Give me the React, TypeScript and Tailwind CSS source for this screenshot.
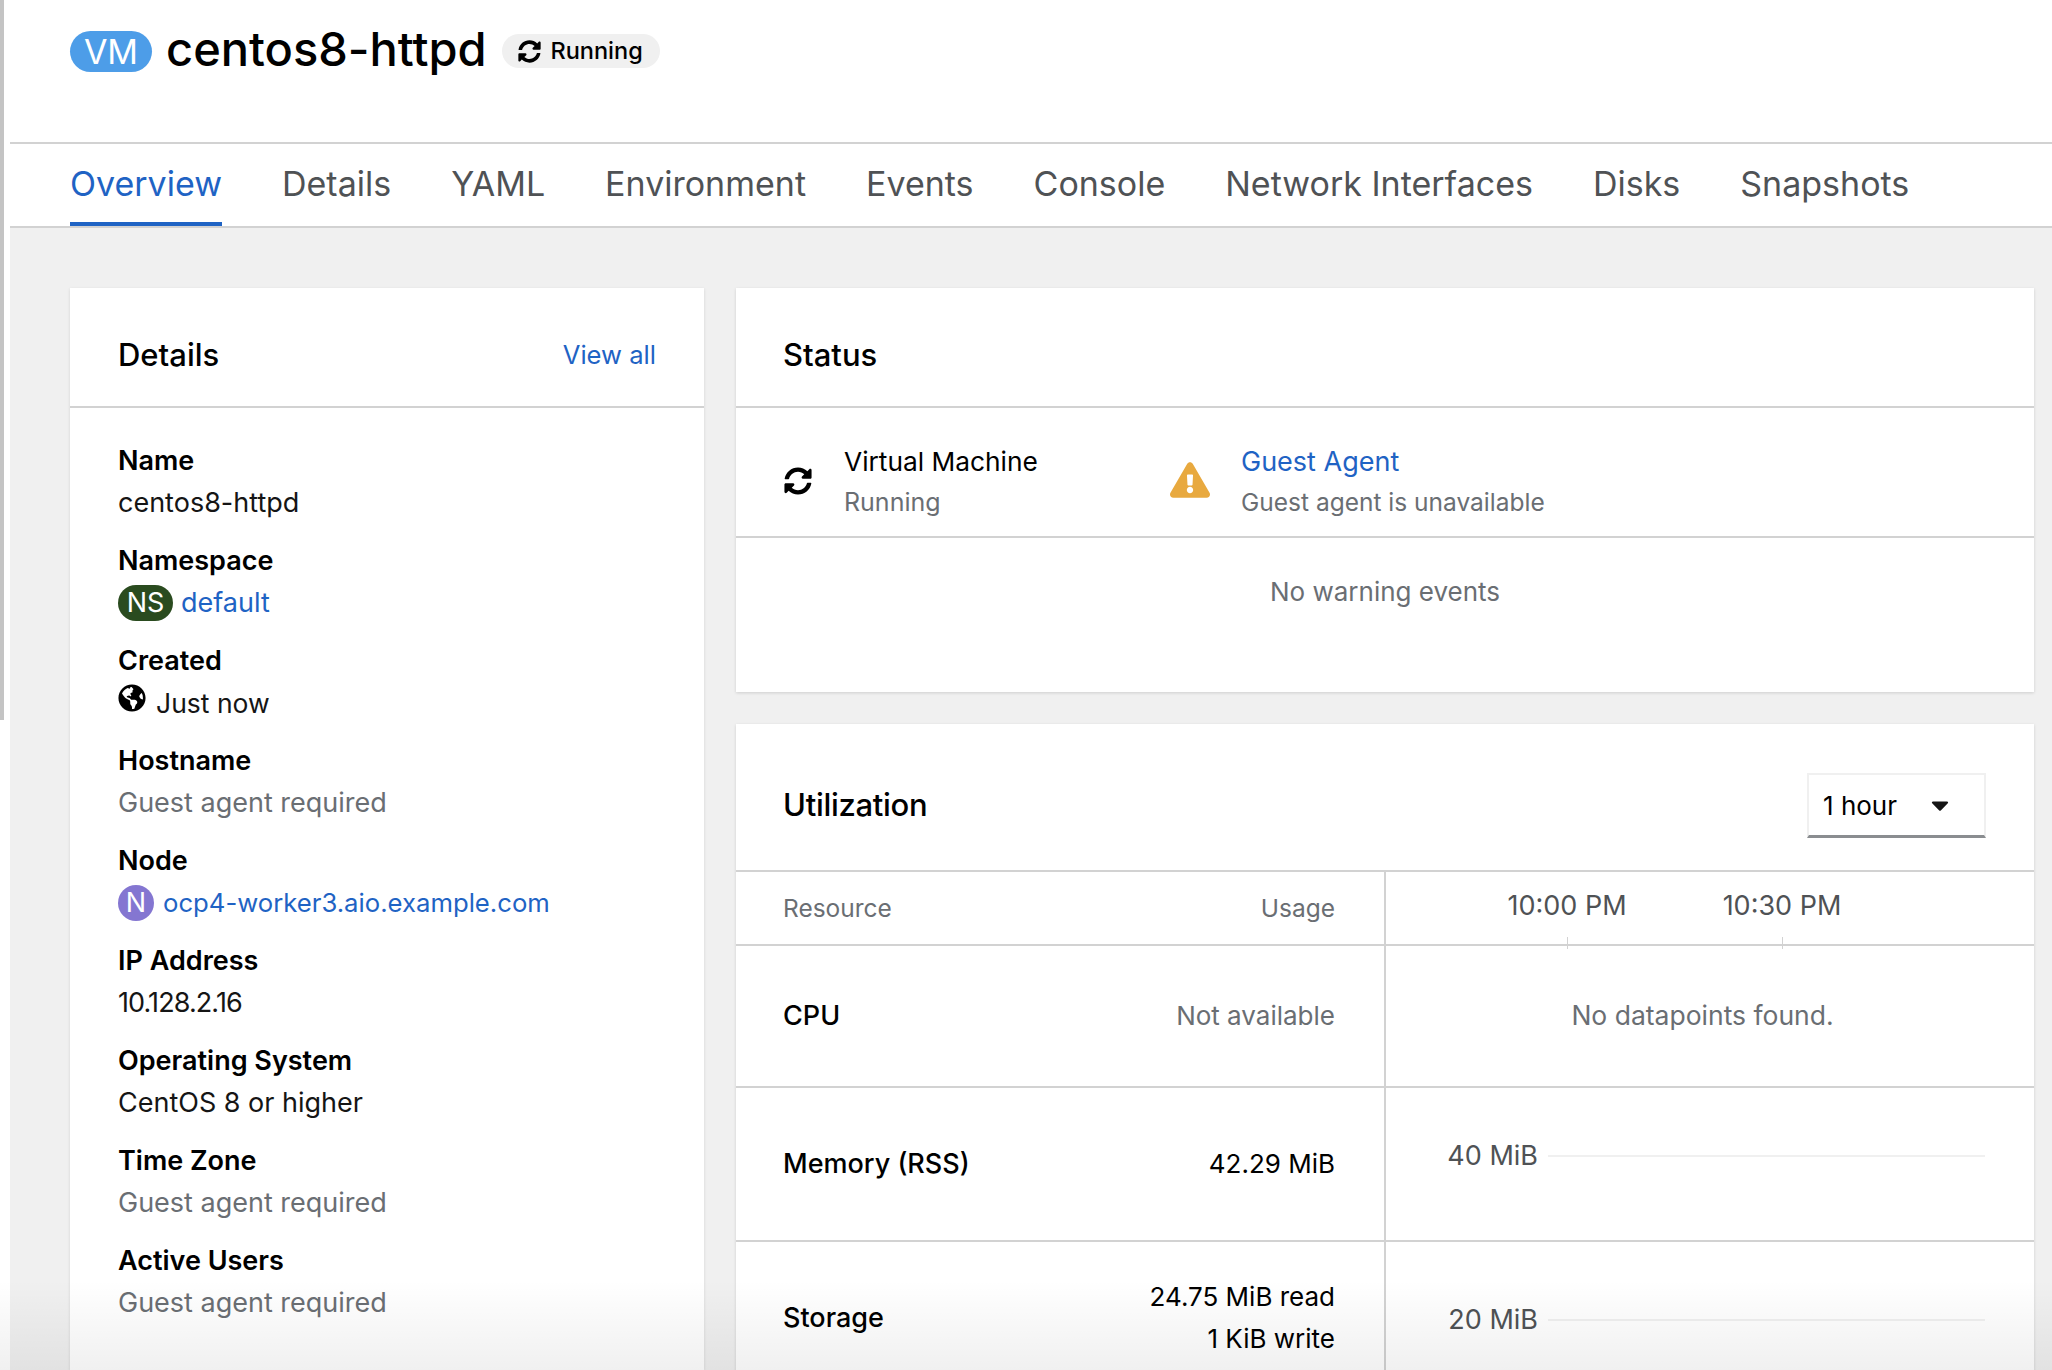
import React from 'react';
import { FaSyncAlt, FaGlobeAmericas, FaExclamationTriangle, FaCaretDown } from 'react-icons/fa';

const tabs = ['Overview', 'Details', 'YAML', 'Environment', 'Events', 'Console', 'Network Interfaces', 'Disks', 'Snapshots'];

const Field = ({ label, children }: { label: string; children: React.ReactNode }) => (
  <div className="mb-4">
    <div className="h-[42px] leading-[42px] font-semibold text-black">{label}</div>
    <div className="h-[42px] leading-[42px] flex items-center">{children}</div>
  </div>
);

const Muted = ({ children }: { children: React.ReactNode }) => <span className="text-[#6a6e73]">{children}</span>;

const DetailsCard = () => (
  <section className="w-[634px] shrink-0 bg-white shadow-[0_1px_3px_rgba(0,0,0,0.12)]">
    <div className="h-[120px] px-12 pt-[16px] flex items-center justify-between border-b-2 border-[#d2d2d2]">
      <h2 className="text-[31px] font-medium text-black">Details</h2>
      <a className="text-[25.6px] text-[#1f63c4]">View all</a>
    </div>
    <div className="px-12 pt-[32px]">
      <Field label="Name">centos8-httpd</Field>
      <Field label="Namespace">
        <span className="h-9 w-[55px] rounded-[18px] bg-[#2a4b1f] text-white flex items-center justify-center mr-2">NS</span>
        <a className="text-[#1f63c4]">default</a>
      </Field>
      <Field label="Created">
        <FaGlobeAmericas className="w-7 h-7 text-black mr-[10px] -mt-[10px]" />
        <span className="text-[26.5px]">Just now</span>
      </Field>
      <Field label="Hostname"><Muted>Guest agent required</Muted></Field>
      <Field label="Node">
        <span className="h-9 w-9 rounded-full bg-[#8476d1] text-white flex items-center justify-center mr-[9px]">N</span>
        <a className="text-[25.7px] text-[#1f63c4]">ocp4-worker3.aio.example.com</a>
      </Field>
      <Field label="IP Address"><span className="tracking-[-0.9px]">10.128.2.16</span></Field>
      <Field label="Operating System">CentOS 8 or higher</Field>
      <Field label="Time Zone"><Muted>Guest agent required</Muted></Field>
      <Field label="Active Users"><Muted>Guest agent required</Muted></Field>
    </div>
  </section>
);

const StatusCard = () => (
  <section className="h-[404px] bg-white shadow-[0_1px_3px_rgba(0,0,0,0.14)]">
    <div className="h-[120px] pl-[47px] pr-12 pt-[16px] flex items-center border-b-2 border-[#d2d2d2]">
      <h2 className="text-[31px] font-medium text-black">Status</h2>
    </div>
    <div className="h-[130px] pt-[20px] flex items-center pl-12 border-b-2 border-[#d2d2d2]">
      <FaSyncAlt className="w-7 h-7 text-black mr-[32px] -mt-[2px]" />
      <div className="w-[326px] leading-[41px]">
        <div className="text-[26.3px] text-black">Virtual Machine</div>
        <div className="text-[25px] text-[#6a6e73]">Running</div>
      </div>
      <FaExclamationTriangle className="w-10 h-9 text-[#e8a93f] mr-[31px] -mt-[4px]" />
      <div className="leading-[41px]">
        <a className="block text-[#1f63c4]">Guest Agent</a>
        <div className="text-[24.5px] text-[#6a6e73]">Guest agent is unavailable</div>
      </div>
    </div>
    <div className="pt-[33px] text-center text-[26px] leading-[42px] text-[#6a6e73]">No warning events</div>
  </section>
);

const UtilRow = ({ height, name, usage, children }: { height: string; name: string; usage: React.ReactNode; children: React.ReactNode }) => (
  <div className={`flex ${height} border-b-2 border-[#d2d2d2]`}>
    <div className="w-[650px] pl-[47px] pr-[49px] flex items-center justify-between border-r-2 border-[#d2d2d2]">
      <span className="font-medium text-black">{name}</span>
      <div className="text-right text-[26px] leading-[42px] text-black">{usage}</div>
    </div>
    <div className="flex-1 relative">{children}</div>
  </div>
);

const YLine = ({ label, className }: { label: string; className: string }) => (
  <div className={`flex items-center pr-[49px] text-[#4f5255] ${className}`}>
    <span className="w-[152px] text-right mr-[10px]">{label}</span>
    <span className="flex-1 h-[2px] bg-[#f0f0f0]" />
  </div>
);

const UtilizationCard = () => (
  <section className="mt-8 bg-white shadow-[0_1px_3px_rgba(0,0,0,0.14)]">
    <div className="h-[148px] pl-[47px] pr-[48px] pt-[17px] flex items-center justify-between border-b-2 border-[#d2d2d2]">
      <h2 className="text-[31px] tracking-[-0.3px] font-medium text-black">Utilization</h2>
      <div className="w-[179px] h-[65px] border-2 border-[#f0f0f0] border-b-[3px] border-b-[#8a8d90] flex items-center pl-[14px] pr-[30px] justify-between text-[26px] text-black">
        <span>1 hour</span>
        <FaCaretDown className="w-7 h-7 text-[#151515]" />
      </div>
    </div>
    <div className="flex h-[74px] border-b-2 border-[#d2d2d2]">
      <div className="w-[650px] pl-[47px] pr-[49px] flex items-center justify-between border-r-2 border-[#d2d2d2] text-[24.5px] text-[#6a6e73]">
        <span>Resource</span>
        <span>Usage</span>
      </div>
      <div className="flex-1 relative text-[#4f5255]">
        <span className="absolute left-[121px] w-[120px] text-center top-[13px] leading-[42px]">10:00 PM</span>
        <span className="absolute left-[336px] w-[120px] text-center top-[13px] leading-[42px]">10:30 PM</span>
        <span className="absolute left-[181px] bottom-[-5px] h-3 w-px bg-[#d2d2d2]" />
        <span className="absolute left-[396px] bottom-[-5px] h-3 w-px bg-[#d2d2d2]" />
      </div>
    </div>
    <UtilRow height="h-[142px]" name="CPU" usage={<Muted>Not available</Muted>}>
      <div className="h-full flex items-center justify-center text-[26.5px] text-[#6a6e73] pr-[15px]">No datapoints found.</div>
    </UtilRow>
    <UtilRow height="h-[154px]" name="Memory (RSS)" usage="42.29 MiB">
      <YLine label="40 MiB" className="mt-[48px]" />
    </UtilRow>
    <UtilRow
      height="h-[154px]"
      name="Storage"
      usage={
        <>
          <div>24.75 MiB read</div>
          <div>1 KiB write</div>
        </>
      }
    >
      <YLine label="20 MiB" className="mt-[58px]" />
    </UtilRow>
  </section>
);

export default function App() {
  return (
    <div className="relative h-[1370px] w-[2052px] overflow-hidden bg-white font-['Inter',sans-serif] text-[27px] text-[#151515]">
      <div className="absolute left-0 top-0 h-[720px] w-1 bg-[#c4c4c4]" />
      <div className="ml-[10px]">
        <header className="h-[142px] pl-[60px] pt-[31px] flex items-start">
          <span className="h-[41px] w-[82px] rounded-[21px] bg-[#4d9de8] text-white text-[34px] flex items-center justify-center">VM</span>
          <h1 className="ml-[14px] -mt-[3px] text-[47px] leading-[41px] font-medium text-black">centos8-httpd</h1>
          <span className="ml-[15px] mt-[3px] h-[34px] w-[158px] rounded-[17px] bg-[#f0f0f0] flex items-center justify-center gap-[9px] text-[23.5px] font-medium text-black">
            <FaSyncAlt className="w-[23px] h-[23px]" />
            Running
          </span>
        </header>
        <nav className="h-[86px] border-y-2 border-[#d2d2d2] pl-[60px] flex gap-[60px] text-[#4f5255] text-[34px]">
          {tabs.map((t, i) => (
            <a
              key={t}
              className={
                i === 0
                  ? 'h-[82px] flex items-center border-b-4 border-[#1f63c4] text-[#1f63c4]'
                  : 'h-[82px] flex items-center border-b-4 border-transparent'
              }
            >
              {t}
            </a>
          ))}
        </nav>
        <main className="h-[1142px] bg-[#f0f0f0] pl-[60px] pr-[18px] pt-[60px] flex gap-8">
          <DetailsCard />
          <div className="flex-1">
            <StatusCard />
            <UtilizationCard />
          </div>
        </main>
      </div>
      <div className="absolute left-0 right-0 bottom-0 h-[90px] bg-gradient-to-b from-transparent to-[rgba(0,0,0,0.06)]" />
    </div>
  );
}
